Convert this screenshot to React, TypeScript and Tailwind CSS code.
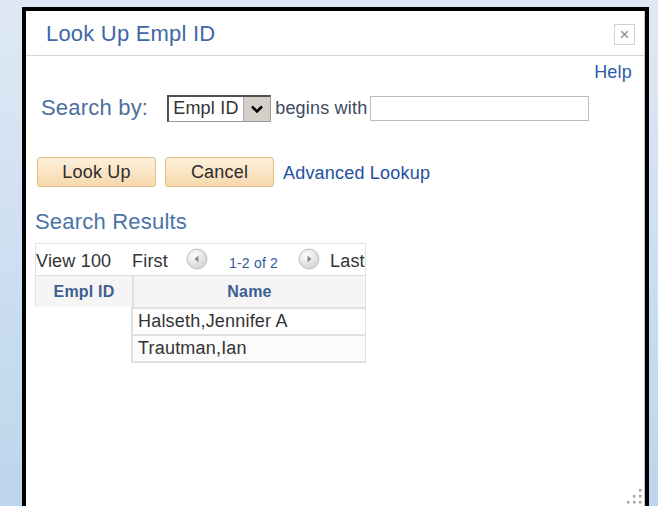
import React from "react";

const font = { fontFamily: '"Liberation Sans", Arial, sans-serif' };

function NavCircle({ dir }: { dir: "left" | "right" }) {
  return (
    <svg width="22" height="22" viewBox="0 0 22 22">
      <defs>
        <radialGradient id={`g-${dir}`} cx="40%" cy="35%" r="70%">
          <stop offset="0%" stopColor="#ffffff" />
          <stop offset="100%" stopColor="#d0d0d0" />
        </radialGradient>
      </defs>
      <circle cx="11" cy="11" r="10" fill={`url(#g-${dir})`} stroke="#c2c2c2" strokeWidth="1" />
      {dir === "left" ? (
        <path d="M12.5 7.5 L8.5 11 L12.5 14.5 Z" fill="#888" />
      ) : (
        <path d="M9.5 7.5 L13.5 11 L9.5 14.5 Z" fill="#888" />
      )}
    </svg>
  );
}

function ResizeGrip() {
  const dots: [number, number][] = [
    [12, 0],
    [6, 6],
    [12, 6],
    [0, 12],
    [6, 12],
    [12, 12],
  ];
  return (
    <svg width="15" height="15" viewBox="0 0 15 15" className="absolute right-[2px] bottom-[2px]">
      {dots.map(([x, y], i) => (
        <rect key={i} x={x} y={y} width="2.5" height="2.5" fill="#a0a0a0" />
      ))}
    </svg>
  );
}

export default function App() {
  return (
    <div
      className="w-[658px] h-[506px] overflow-hidden bg-gradient-to-b from-[#dfe9f5] to-[#bcd5ec] pt-[7px] pl-[22px] tracking-[0.2px]"
      style={font}
    >
      <div className="relative w-[627px] h-[520px] border-[4px] border-black bg-white">
        <div className="h-full border-r border-[#c9c9c9] relative">
          {/* title bar */}
          <div className="h-[45px] flex items-center justify-between pl-[20px] pr-[9px] border-b border-[#d6d6d6]">
            <span className="text-[22px] text-[#3f68a3] leading-none pt-[1px]">Look Up Empl ID</span>
            <div className="w-[21px] h-[21px] mt-[2px] border border-[#d2d2d2] flex items-center justify-center text-[#8c8c8c] text-[17px] leading-none">
              ×
            </div>
          </div>

          {/* body */}
          <div className="relative">
            <div className="flex justify-end pr-[12px] pt-[6px] h-[38px]">
              <span className="text-[18px] text-[#2a5cab] leading-[20px]">Help</span>
            </div>

            <div className="flex items-center h-[28px] pl-[15px]">
              <span className="text-[22px] text-[#4c6d9e] leading-none">Search by:</span>
              <div className="ml-[19px] w-[104px] h-[27px] flex border-t-2 border-l-2 border-[#505050] border-r border-b border-r-[#9a9a9a] border-b-[#9a9a9a] bg-white">
                <span className="flex-1 text-[18px] text-[#333] leading-[23px] pl-[4px]">Empl ID</span>
                <div className="w-[27px] h-full bg-[#d4d0c8] border-l border-[#a8a8a8] flex items-center justify-center">
                  <svg width="14" height="10" viewBox="0 0 14 10">
                    <path d="M2 2.5 L7 7.5 L12 2.5" fill="none" stroke="#000" strokeWidth="2.6" />
                  </svg>
                </div>
              </div>
              <span className="ml-[4px] text-[18px] text-[#3d4b5e] leading-none">begins with</span>
              <div className="ml-[3px] w-[219px] h-[25px] border border-[#bdbdbd] bg-white" />
            </div>

            <div className="flex items-center mt-[35px] pl-[11px] h-[30px]">
              <button className="w-[119px] h-[30px] rounded-[3px] border border-[#e4bd85] bg-gradient-to-b from-[#fdf0dc] to-[#f6d9ad] text-[18px] text-[#2c2c2c] leading-none">
                Look Up
              </button>
              <button className="ml-[9px] w-[109px] h-[30px] rounded-[3px] border border-[#e4bd85] bg-gradient-to-b from-[#fdf0dc] to-[#f6d9ad] text-[18px] text-[#2c2c2c] leading-none">
                Cancel
              </button>
              <span className="ml-[9px] text-[18px] text-[#23509e] leading-none pt-[2px]">Advanced Lookup</span>
            </div>

            <div className="mt-[22px] pl-[9px] h-[26px] text-[22px] text-[#4a73a8] leading-[26px]">Search Results</div>

            {/* results grid */}
            <div className="mt-[8px] ml-[9px] w-[331px]">
              <div className="h-[33px] flex items-center border border-[#e2e2e2] border-b-[#dcdcdc] pt-[2px] whitespace-nowrap">
                <span className="w-[96px] shrink-0 text-[18px] text-[#333] leading-none">View 100</span>
                <span className="w-[54px] shrink-0 text-[18px] text-[#333] leading-none">First</span>
                <span className="w-[43px] shrink-0 flex items-center -mt-[4px]">
                  <NavCircle dir="left" />
                </span>
                <span className="w-[69px] shrink-0 text-[14px] text-[#2e5a9c] leading-none pt-[4px]">1-2 of 2</span>
                <span className="w-[32px] shrink-0 flex items-center -mt-[4px]">
                  <NavCircle dir="right" />
                </span>
                <span className="shrink-0 text-[18px] text-[#333] leading-none">Last</span>
              </div>
              <div className="flex h-[31px]">
                <div className="w-[97px] bg-[#f5f5f5] border-l border-[#e2e2e2] flex items-center justify-center text-[16px] font-bold text-[#3d5f92]">
                  Empl ID
                </div>
                <div className="flex-1 bg-[#f5f5f5] border-l-2 border-r border-[#e0e0e0] flex items-center justify-center text-[16px] font-bold text-[#3d5f92]">
                  Name
                </div>
              </div>
              <div className="flex">
                <div className="w-[96px]" />
                <div className="flex-1 border-l-2 border-r border-b-2 border-t-2 border-[#e0e0e0]">
                  <div className="h-[27px] flex items-center pl-[5px] text-[18px] text-[#333] bg-white border-b-2 border-[#e0e0e0]">
                    Halseth,Jennifer A
                  </div>
                  <div className="h-[25px] flex items-center pl-[5px] text-[18px] text-[#333] bg-[#fbfbfb]">
                    Trautman,Ian
                  </div>
                </div>
              </div>
            </div>
          </div>
          <div className="absolute left-0 right-0 top-[463px] h-[32px]">
            <ResizeGrip />
          </div>
        </div>
      </div>
    </div>
  );
}
